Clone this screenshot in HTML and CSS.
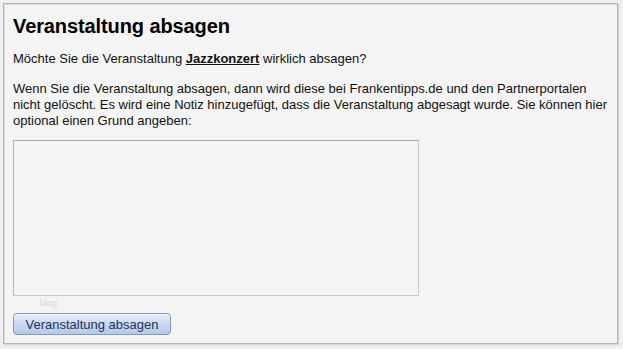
FILE: index.html
```html
<!DOCTYPE html>
<html lang="de">
<head>
<meta charset="utf-8">
<link rel="stylesheet" href="styles.css">
</head>
<body>
<div class="frame">
  <h1 class="title">Veranstaltung absagen</h1>
  <p class="question">Möchte Sie die Veranstaltung <a class="event" href="#">Jazzkonzert</a> wirklich absagen?</p>
  <p class="info">Wenn Sie die Veranstaltung absagen, dann wird diese bei Frankentipps.de und den Partnerportalen nicht gelöscht. Es wird eine Notiz hinzugefügt, dass die Veranstaltung abgesagt wurde. Sie können hier optional einen Grund angeben:</p>
  <textarea class="reason"></textarea>
  <div class="hint">blog</div>
  <button class="submit" type="button">Veranstaltung absagen</button>
</div>
</body>
</html>
```

FILE: styles.css
```css
html, body {
  margin: 0;
  padding: 0;
  background: #f0f0f0;
  width: 623px;
  height: 349px;
  overflow: hidden;
}
body {
  padding: 3px 4px 0 3px;
  box-sizing: border-box;
  font-family: "Liberation Sans", Arial, sans-serif;
}
.frame {
  box-sizing: border-box;
  width: 615px;
  height: 341px;
  background: #f4f4f4;
  border: 1px solid #b4b4b4;
  box-shadow: inset 1px 1px 0 #dcdcdc, 1px 1px 0 #d8d8d8, 2px 2px 0 #e8e8e8;
  padding: 10px 9px 0 9px;
  display: flex;
  flex-direction: column;
  align-items: flex-start;
}
.title {
  margin: 0;
  font-size: 20px;
  font-weight: bold;
  letter-spacing: -0.1px;
  color: #000;
  line-height: 24px;
}
.question {
  margin: 13px 0 0 0;
  font-size: 13px;
  line-height: 16px;
  color: #111;
}
.event {
  color: #111;
  font-weight: bold;
  text-decoration: underline;
}
.info {
  margin: 14px 0 0 0;
  font-size: 13px;
  line-height: 16px;
  color: #111;
  width: 600px;
}
.reason {
  margin: 11px 0 0 0;
  box-sizing: border-box;
  width: 406px;
  height: 156px;
  background: #f4f4f4;
  border: 1px solid #c8c8c8;
  border-top-color: #a8a8a8;
  border-left-color: #b8b8b8;
  resize: none;
  padding: 2px;
}
.hint {
  margin: 0 0 0 27px;
  font-size: 9px;
  line-height: 14px;
  color: #d8d8d8;
}
.submit {
  margin-top: 3px;
  width: 158px;
  height: 22px;
  border: 1px solid #7f9db9;
  border-radius: 4px;
  background: linear-gradient(#e6eefb 0%, #cbdaf3 50%, #b5c9ec 100%);
  box-shadow: inset 0 1px 0 #f4f8ff;
  font-family: "Liberation Sans", Arial, sans-serif;
  font-size: 13px;
  color: #223355;
  padding: 0;
}
```
